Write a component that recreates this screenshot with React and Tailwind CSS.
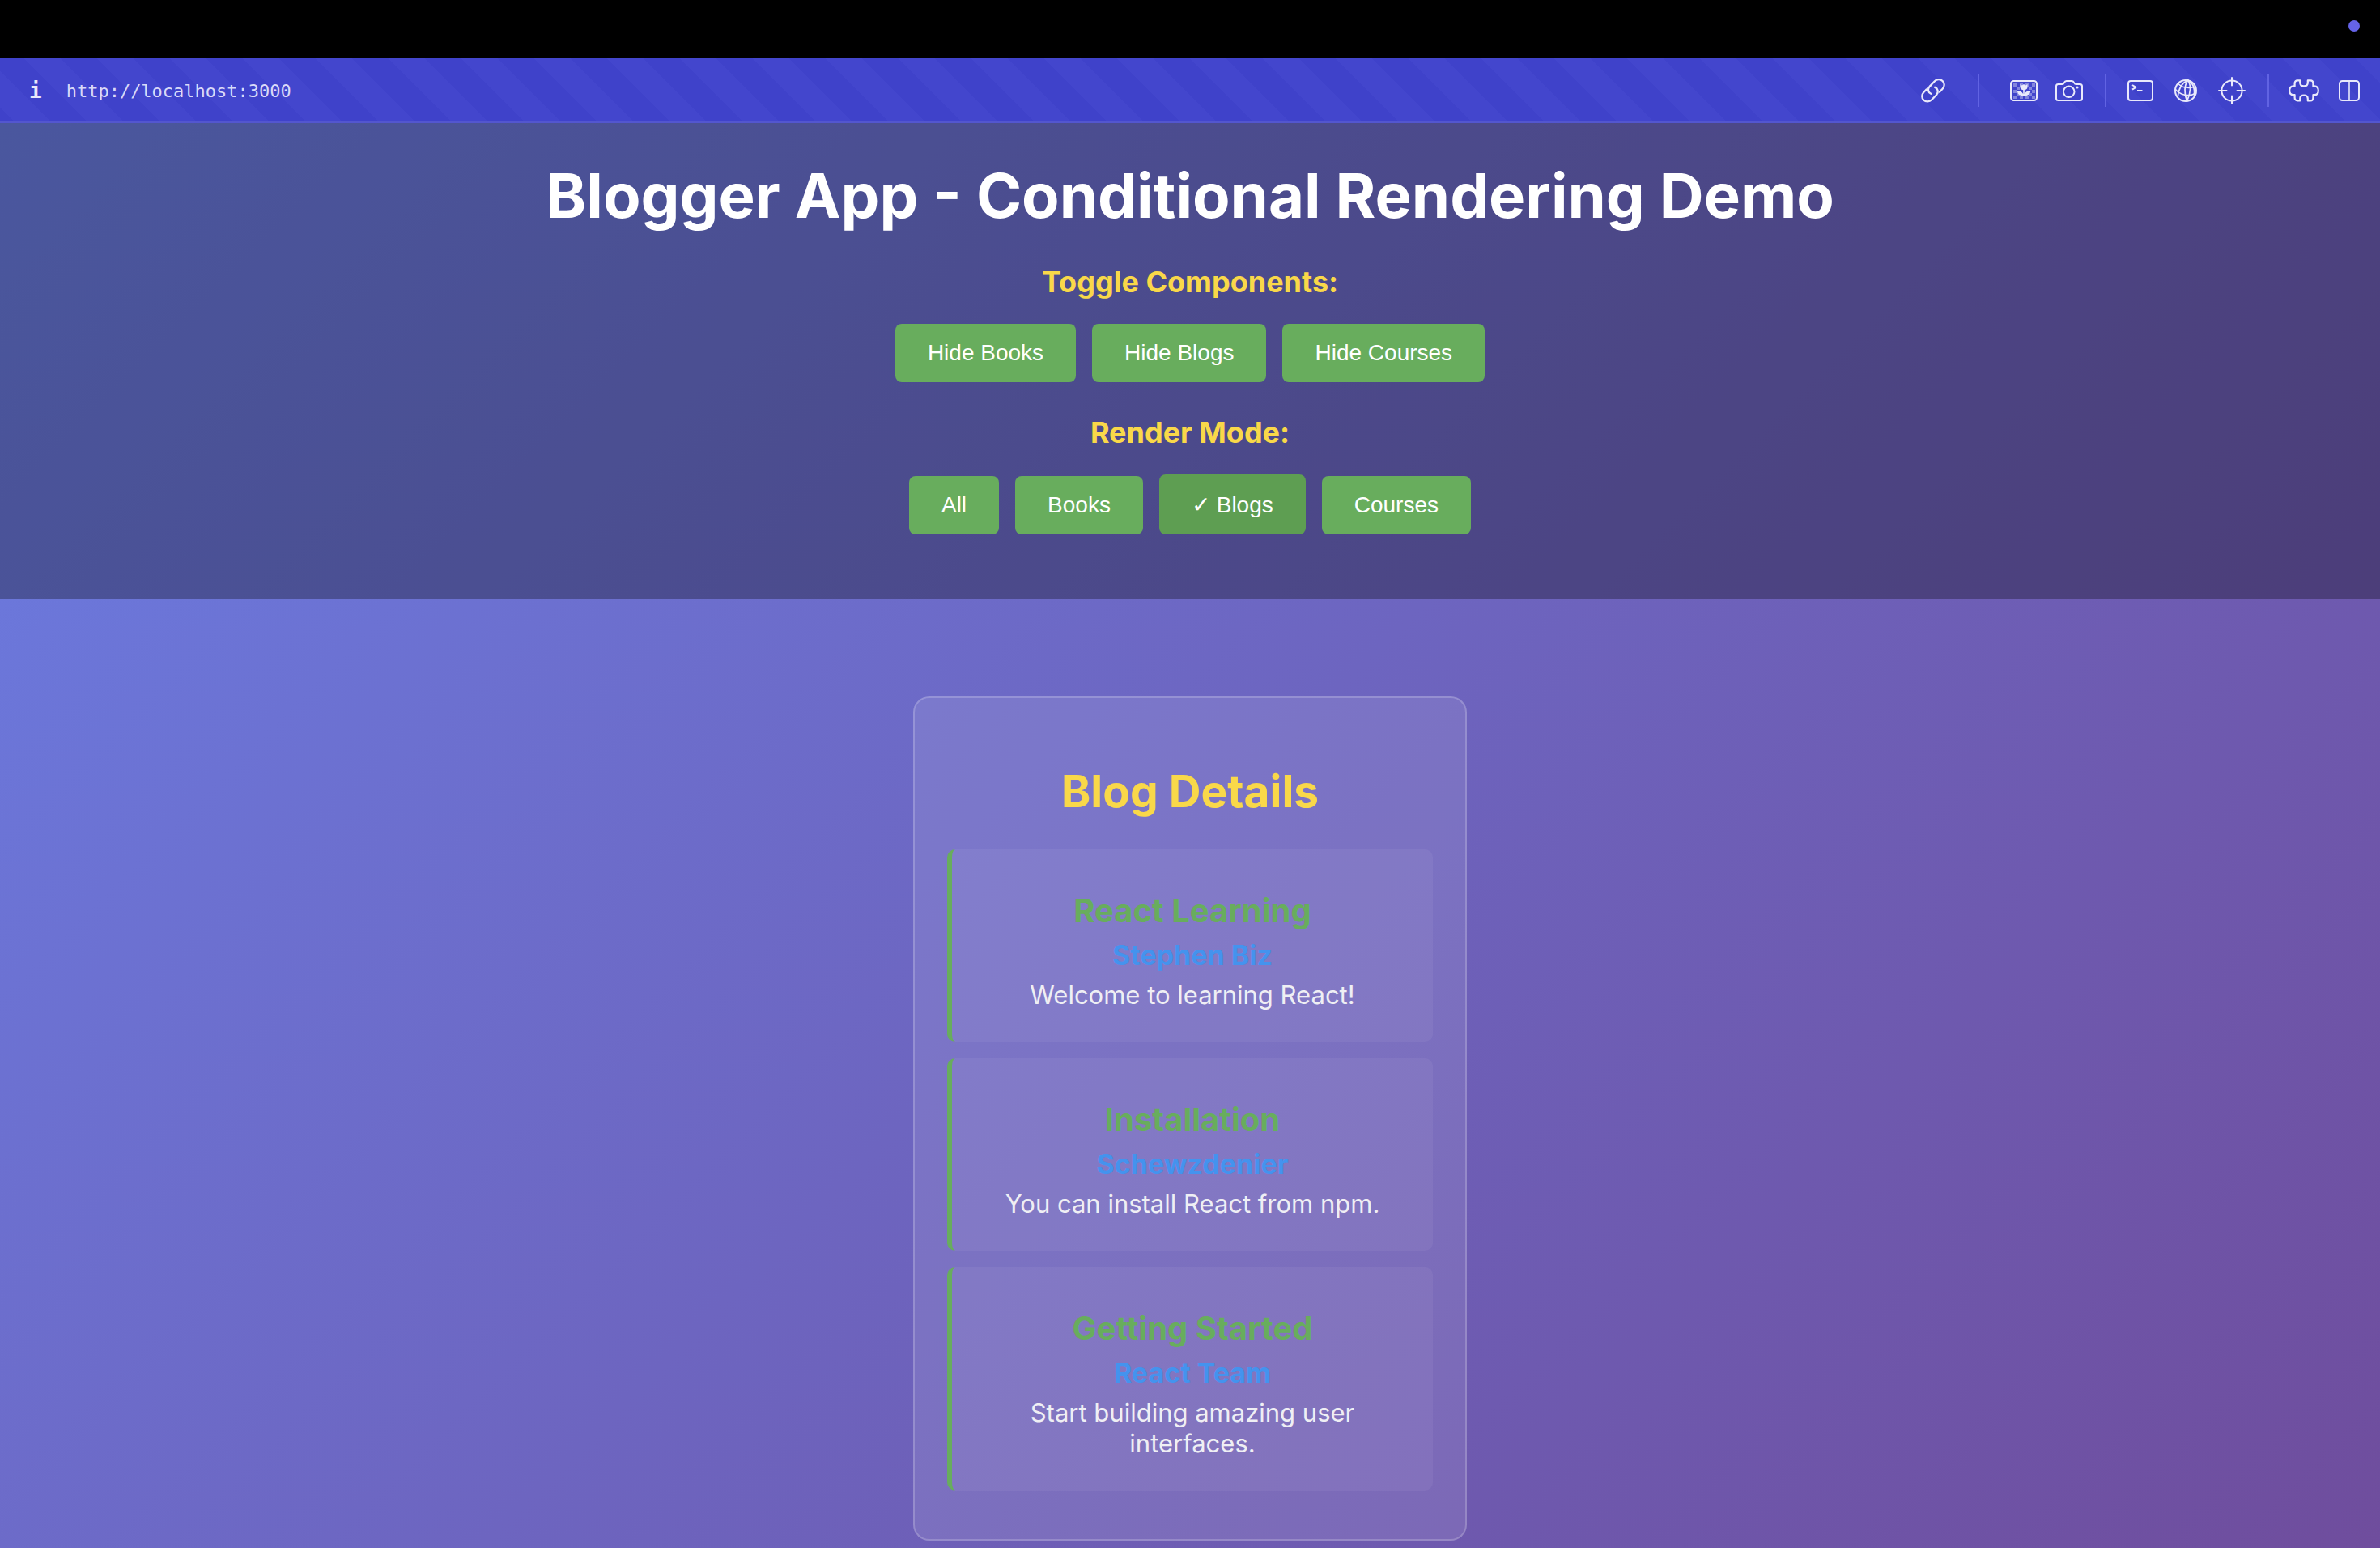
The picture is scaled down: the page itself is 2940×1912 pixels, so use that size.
const stroke = {
  fill: 'none',
  stroke: '#e9e9fb',
  strokeWidth: 2,
  strokeLinecap: 'round',
  strokeLinejoin: 'round',
};

function LinkIcon() {
  return (
    <svg width="30" height="30" viewBox="0 0 30 30" {...stroke} strokeWidth="2.3" aria-hidden="true">
      <path d="M12.2 18.8 C8.6 17.2 7.9 12.6 10.6 9.9 L16.6 3.5 C19.6 0.4 24 0.4 26.6 3 C29.4 5.7 29.4 10 26.6 12.8 L22.9 16.6" />
      <path d="M17.2 10.8 C20.9 12.2 22 17 19.2 20 L13.2 26.2 C10.4 29 6 29.2 3.3 26.6 C0.5 24 0.6 19.8 3.3 17 L6.8 13.4" />
    </svg>
  );
}

const CHECKS = [
  [4, 4], [12, 4], [19, 4], [27, 4],
  [8, 8], [23, 8],
  [4, 12], [27, 12],
  [8, 16], [23, 16],
  [4, 19], [12, 19], [19, 19], [27, 19],
];

function PictureIcon() {
  return (
    <svg width="34" height="26" viewBox="0 0 34 26" aria-hidden="true">
      {CHECKS.map(([x, y]) => (
        <rect key={`${x}-${y}`} x={x} y={y} width="4" height="4" fill="#e9e9fb" opacity="0.4" />
      ))}
      <rect x="1" y="1" width="32" height="24" rx="3.5" {...stroke} />
      <path
        d="M12.5 5 L14.8 6.6 L17 5 L19.2 6.6 L21.5 5 V8.6 C21.5 10.8 20.2 12 17.8 12.2 V17 C19.3 14.6 21.8 13 25.3 13 C25.3 16.8 22 19.6 17 19.6 C12 19.6 8.8 16.8 8.8 13 C12.2 13 14.7 14.6 16.2 17 V12.2 C13.8 12 12.5 10.8 12.5 8.6 Z"
        fill="#e9e9fb"
      />
    </svg>
  );
}

function CameraIcon() {
  return (
    <svg width="34" height="26" viewBox="0 0 34 26" {...stroke} aria-hidden="true">
      <path d="M1 7.5 C1 6 2 5 3.5 5 H8.5 C9.8 5 10.2 4.4 10.8 3.2 C11.5 1.6 12.2 1 13.6 1 H20.4 C21.8 1 22.5 1.6 23.2 3.2 C23.8 4.4 24.2 5 25.5 5 H30.5 C32 5 33 6 33 7.5 V22.5 C33 24 32 25 30.5 25 H3.5 C2 25 1 24 1 22.5 Z" />
      <circle cx="16.7" cy="14.3" r="6.8" />
      <circle cx="27" cy="9" r="1.6" fill="#e9e9fb" stroke="none" />
    </svg>
  );
}

function TerminalIcon() {
  return (
    <svg width="32" height="26" viewBox="0 0 32 26" {...stroke} aria-hidden="true">
      <rect x="1" y="1" width="30" height="24" rx="3" />
      <path d="M6 6 L10.4 8.8 L6 11.6" strokeLinecap="butt" />
      <path d="M12 13 H18.5" strokeLinecap="butt" />
    </svg>
  );
}

function GlobeIcon() {
  return (
    <svg width="28" height="28" viewBox="0 0 28 28" {...stroke} strokeWidth="1.7" aria-hidden="true">
      <circle cx="14" cy="14" r="13" strokeWidth="2" />
      <path d="M16.5 1.2 C10 4 5.5 9 4.2 21.5" />
      <path d="M16.5 1.2 C12.5 7 11.5 17 15.5 26.8" />
      <path d="M17 1.2 C20.5 7 20.5 17 15.5 26.8" />
      <path d="M17 1.2 C22.5 4 25.5 10 24.5 20.5" />
      <path d="M4.8 5.2 C9 10.5 18 11.5 26.2 9" />
      <path d="M1.2 12.2 C7 19.5 18 22 26.4 17" />
    </svg>
  );
}

function CrosshairIcon() {
  return (
    <svg width="34" height="34" viewBox="0 0 34 34" {...stroke} aria-hidden="true">
      <circle cx="17" cy="17" r="12.6" />
      <path d="M17 1 V10.5 M17 23.5 V33 M1 17 H10.5 M23.5 17 H33" />
    </svg>
  );
}

function PuzzleIcon() {
  return (
    <svg width="38" height="28" viewBox="0 0 38 28" {...stroke} strokeWidth="2.2" aria-hidden="true">
      <path d="M11 1.4 H14.2 V4 C14.2 6.8 16 8.4 19 8.4 C22 8.4 23.8 6.8 23.8 4 V1.4 H27 C29 1.4 30.4 2.8 30.4 4.8 V8.4 H32 C35 8.4 36.8 10.6 36.8 14 C36.8 17.4 35 19.2 32 19.2 H30.4 V22.4 C30.4 24.8 29 26.4 27 26.4 H23.8 V24 C23.8 21 22 19.6 19 19.6 C16 19.6 14.2 21 14.2 24 V26.4 H11 C9 26.4 7.6 24.8 7.6 22.4 V19.2 H6 C3 19.2 1.2 17.4 1.2 14 C1.2 10.6 3 8.4 6 8.4 H7.6 V4.8 C7.6 2.8 9 1.4 11 1.4 Z" />
    </svg>
  );
}

function SplitIcon() {
  return (
    <svg width="26" height="26" viewBox="0 0 26 26" {...stroke} aria-hidden="true">
      <rect x="1" y="1" width="24" height="24" rx="3.5" />
      <path d="M13 1 V25" opacity="0.8" />
    </svg>
  );
}

function Tool({ label, children }) {
  return (
    <button type="button" aria-label={label} className="flex items-center justify-center">
      {children}
    </button>
  );
}

function Divider() {
  return <span className="h-10 w-[2px] bg-[#6163e3]" />;
}

function BrowserBar() {
  return (
    <div
      className="flex h-20 items-center justify-between bg-[#3f42ca] bg-[linear-gradient(45deg,#3f42ca_25%,#4346cd_25%,#4346cd_50%,#3f42ca_50%,#3f42ca_75%,#4346cd_75%)] bg-[length:90px_90px] bg-[position:-15px_0px] pr-[25px] pl-9 font-['DejaVu_Sans_Mono',monospace] shadow-[inset_0_-2px_0_#5356cf]"
    >
      <div className="flex items-center gap-[30px]">
        <button type="button" aria-label="Site information" className="text-[26px] font-bold text-[#e9e9fb]">
          i
        </button>
        <span className="text-[22px] text-[#d9d9f8]">http://localhost:3000</span>
      </div>
      <div className="flex items-center">
        <Tool label="Copy link"><LinkIcon /></Tool>
        <div className="flex items-center gap-[22px] pl-10">
          <Divider />
          <div className="flex items-center gap-[22px] pl-4">
            <Tool label="Picture"><PictureIcon /></Tool>
            <Tool label="Take screenshot"><CameraIcon /></Tool>
          </div>
        </div>
        <div className="flex items-center gap-[26px] pl-[27px]">
          <Divider />
          <Tool label="Console"><TerminalIcon /></Tool>
          <Tool label="Network"><GlobeIcon /></Tool>
          <Tool label="Inspect element"><CrosshairIcon /></Tool>
        </div>
        <div className="flex items-center gap-6 pl-[27px]">
          <Divider />
          <Tool label="Extensions"><PuzzleIcon /></Tool>
          <Tool label="Split view"><SplitIcon /></Tool>
        </div>
      </div>
    </div>
  );
}

function ActionButton({ active = false, children }) {
  return (
    <button
      type="button"
      aria-pressed={active}
      className={
        active
          ? "h-[74px] rounded-lg bg-[#5e9e52] px-10 pt-[2px] font-['Liberation_Sans',sans-serif] text-[28px] text-white"
          : "h-[72px] rounded-lg bg-[#68ad5d] px-10 font-['Liberation_Sans',sans-serif] text-[28px] text-white"
      }
    >
      {children}
    </button>
  );
}

function ControlGroup({ title, children }) {
  return (
    <section className="flex flex-col items-center gap-[30px]">
      <h3 className="text-[36px] leading-[44px] font-bold text-[#f9d849]">{title}</h3>
      <div className="flex items-end gap-5">{children}</div>
    </section>
  );
}

const BLOGS = [
  { title: 'React Learning', author: 'Stephen Biz', text: 'Welcome to learning React!' },
  { title: 'Installation', author: 'Schewzdenier', text: 'You can install React from npm.' },
  { title: 'Getting Started', author: 'React Team', text: 'Start building amazing user interfaces.' },
];

function BlogItem({ title, author, text }) {
  return (
    <article className="rounded-[10px] border-l-[6px] border-[#68ad5d] bg-white/5 px-10 pt-[51px] pb-[39px]">
      <h3 className="text-[40px] leading-[50px] font-bold text-[#68ad5d]">{title}</h3>
      <h4 className="my-[10px] text-[34px] leading-10 font-bold text-[#4493ee]">{author}</h4>
      <p className="text-[31px] leading-[38px] text-[#efeff4]">{text}</p>
    </article>
  );
}

export default function App() {
  return (
    <div className="flex min-h-screen flex-col font-['Inter',sans-serif]">
      <div className="flex h-[72px] justify-end bg-black pt-[25px] pr-[25px]">
        <span className="size-[14px] rounded-full bg-[#6563e8]" />
      </div>
      <BrowserBar />
      <div className="flex flex-1 flex-col bg-[linear-gradient(135deg,#6b7de3_0%,#6f4d9d_100%)] text-center">
        <header className="flex flex-col items-center bg-black/30 pt-[41px] pb-20">
          <h1 className="mb-[37px] text-[76px] leading-[96px] font-bold text-white">
            Blogger App - Conditional Rendering Demo
          </h1>
          <div className="flex flex-col gap-10">
            <ControlGroup title="Toggle Components:">
              <ActionButton>Hide Books</ActionButton>
              <ActionButton>Hide Blogs</ActionButton>
              <ActionButton>Hide Courses</ActionButton>
            </ControlGroup>
            <ControlGroup title="Render Mode:">
              <ActionButton>All</ActionButton>
              <ActionButton>Books</ActionButton>
              <ActionButton active>✓ Blogs</ActionButton>
              <ActionButton>Courses</ActionButton>
            </ControlGroup>
          </div>
        </header>
        <main className="flex flex-1 flex-col items-center px-10 pt-[120px] pb-2">
          <section className="w-full max-w-[684px] rounded-[20px] border-2 border-white/20 bg-white/10 px-10 pt-20 pb-[60px]">
            <h2 className="mb-[37px] text-[55px] leading-[70px] font-bold text-[#f9d849]">Blog Details</h2>
            <div className="flex flex-col gap-5">
              {BLOGS.map((blog) => (
                <BlogItem key={blog.title} {...blog} />
              ))}
            </div>
          </section>
        </main>
      </div>
    </div>
  );
}
